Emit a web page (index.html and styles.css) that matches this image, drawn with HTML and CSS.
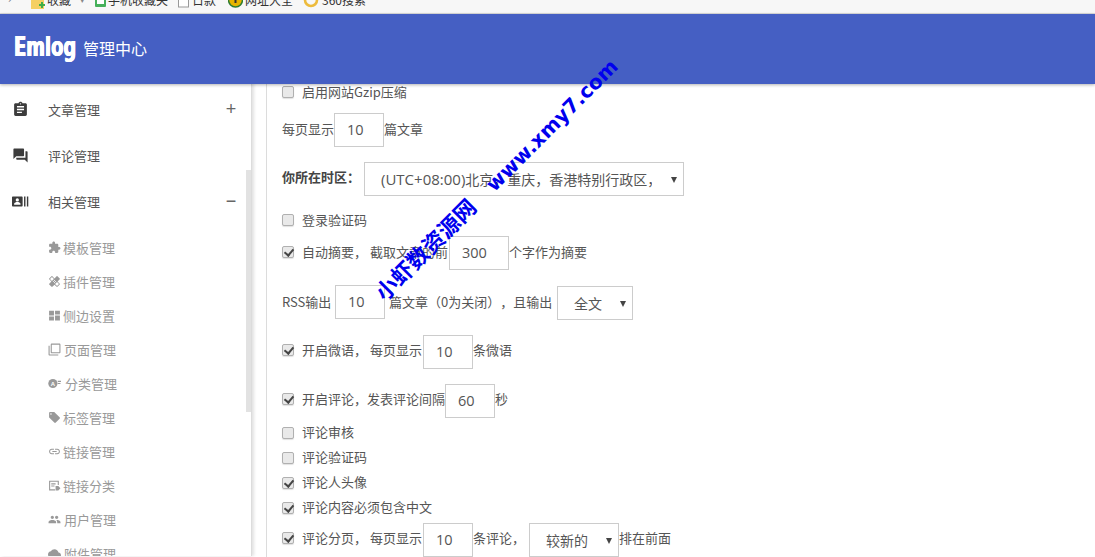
FILE: index.html
```html
<!DOCTYPE html>
<html lang="zh">
<head>
<meta charset="utf-8">
<title>Emlog 管理中心</title>
<link rel="stylesheet" href="styles.css">
</head>
<body>
<div class="bookmarks">
  <span class="chev">›</span>
  <span class="bm bm-fav"><svg width="14" height="14" viewBox="0 0 14 14"><path d="M0 0h13v9H0z" fill="#f5cf62"/><path d="M8 4h2V2h2v2h2v2h-2v2h-2V6H8z" fill="#3fae49"/></svg>收藏<span class="bm-caret">▾</span></span>
  <span class="bm bm-phone"><svg width="11" height="14" viewBox="0 0 11 14"><rect x="0" y="-2" width="11" height="9" rx="1" fill="#46b05a"/><rect x="2" y="-2" width="7" height="6" fill="#fff"/></svg>手机收藏夹</span>
  <span class="bm bm-day"><svg width="12" height="14" viewBox="0 0 12 14"><rect x=".5" y="-2" width="10" height="9" fill="#fff" stroke="#999"/></svg>日款</span>
  <span class="bm bm-web"><svg width="15" height="14" viewBox="0 0 15 14"><circle cx="7.500" cy="0" r="7" fill="#e6b400" stroke="#2e7d32" stroke-width="1.500"/><rect x="6.500" y="0" width="2" height="3" fill="#333"/></svg>网址大全</span>
  <span class="bm bm-360"><svg width="17" height="14" viewBox="0 0 17 14"><circle cx="8" cy="0" r="6" fill="none" stroke="#edbb3c" stroke-width="2.600"/></svg>360搜索</span>
</div>
<header class="topbar">
  <span class="logo"><span class="logo-text">Emlog</span></span>
  <span class="logo-sub">管理中心</span>
</header>
<div class="main">
  <nav class="sidebar">
    <ul class="menu">
      <li class="menu-item">
        <svg class="menu-icon" viewBox="0 0 24 24"><path d="M19 3h-4.200C14.400 1.800 13.300 1 12 1s-2.400.8-2.800 2H5C3.900 3 3 3.900 3 5v14c0 1.100.9 2 2 2h14c1.100 0 2-.9 2-2V5c0-1.100-.9-2-2-2zm-7 0c.6 0 1 .4 1 1s-.4 1-1 1-1-.4-1-1 .4-1 1-1zm2 14H7v-2h7v2zm3-4H7v-2h10v2zm0-4H7V7h10v2z" fill="#3c3c3c"/></svg>
        <span class="menu-label">文章管理</span><span class="toggle">+</span>
      </li>
      <li class="menu-item">
        <svg class="menu-icon" viewBox="0 0 24 24"><path d="M21 6h-2v9H6v2c0 .6.400 1 1 1h11l4 4V7c0-.6-.4-1-1-1zm-4 6V3c0-.6-.4-1-1-1H3c-.6 0-1 .4-1 1v14l4-4h10c.6 0 1-.4 1-1z" fill="#3c3c3c"/></svg>
        <span class="menu-label">评论管理</span>
      </li>
      <li class="menu-item">
        <svg class="menu-icon" viewBox="0 0 24 24"><path d="M1 5h13c.6 0 1 .4 1 1v12c0 .6-.4 1-1 1H1c-.6 0-1-.4-1-1V6c0-.6.400-1 1-1zm6.500 2.500a2.300 2.300 0 1 0 0 4.600 2.300 2.300 0 0 0 0-4.600zM3 16.500h9V15c0-1.500-3-2.300-4.500-2.300S3 13.500 3 15zM17 5h2v14h-2zM21 5h2v14h-2z" fill="#3c3c3c"/></svg>
        <span class="menu-label">相关管理</span><span class="toggle">−</span>
      </li>
    </ul>
    <ul class="submenu">
      <li class="sub-item"><svg class="sub-icon" viewBox="0 0 24 24"><path d="M20.500 11H19V7c0-1.100-.9-2-2-2h-4V3.500C13 2.120 11.880 1 10.500 1S8 2.120 8 3.500V5H4c-1.100 0-1.990.9-1.990 2v3.800H3.500c1.490 0 2.700 1.210 2.700 2.700s-1.210 2.700-2.700 2.700H2V20c0 1.100.9 2 2 2h3.800v-1.500c0-1.490 1.210-2.700 2.700-2.700 1.490 0 2.700 1.210 2.700 2.700V22H17c1.100 0 2-.9 2-2v-4h1.500c1.380 0 2.500-1.120 2.500-2.500S21.880 11 20.500 11z"/></svg><span class="gap-a">模板管理</span></li>
      <li class="sub-item"><svg class="sub-icon" viewBox="0 0 24 24"><path d="M17.730 12.020l3.980-3.980c.39-.39.39-1.020 0-1.410l-4.340-4.340c-.39-.39-1.020-.39-1.410 0l-3.980 3.980L8 2.290C7.800 2.100 7.550 2 7.290 2c-.25 0-.51.100-.7.290L2.250 6.630c-.39.390-.39 1.020 0 1.410l3.980 3.980L2.250 16c-.39.390-.39 1.020 0 1.410l4.340 4.340c.39.390 1.020.390 1.410 0l3.980-3.980 3.980 3.980c.2.200.45.290.71.290.26 0 .51-.1.710-.29l4.340-4.340c.39-.39.39-1.020 0-1.410l-3.990-3.980zM12 9c.55 0 1 .45 1 1s-.45 1-1 1-1-.45-1-1 .45-1 1-1zm-4.710 1.960L3.660 7.340l3.630-3.630 3.620 3.620-3.620 3.630zM10 13c-.55 0-1-.45-1-1s.45-1 1-1 1 .45 1 1-.45 1-1 1zm2 2c-.55 0-1-.45-1-1s.45-1 1-1 1 .45 1 1-.45 1-1 1zm2-4c.55 0 1 .45 1 1s-.45 1-1 1-1-.45-1-1 .45-1 1-1zm2.660 9.340l-3.630-3.620 3.630-3.630 3.620 3.620-3.620 3.630z"/></svg><span class="gap-a">插件管理</span></li>
      <li class="sub-item"><svg class="sub-icon" viewBox="0 0 24 24"><path d="M2 3h9v9H2zM13 3h9v7h-9zM2 14h9v7H2zM13 12h9v9h-9z"/></svg><span class="gap-a">侧边设置</span></li>
      <li class="sub-item"><svg class="sub-icon" viewBox="0 0 24 24"><path d="M3 5H1v16c0 1.100.9 2 2 2h16v-2H3V5zm18-4H7c-1.100 0-2 .9-2 2v14c0 1.100.9 2 2 2h14c1.100 0 2-.9 2-2V3c0-1.100-.9-2-2-2zm0 16H7V3h14v14z"/></svg><span class="gap-b">页面管理</span></li>
      <li class="sub-item"><svg class="sub-icon" viewBox="0 0 24 24"><circle cx="9" cy="12" r="8.500"/><path d="M18 7h6v2h-6zM18 11h5v2h-5z"/><text x="9" y="16" class="icon-a">A</text></svg><span class="gap-c">分类管理</span></li>
      <li class="sub-item"><svg class="sub-icon" viewBox="0 0 24 24"><path d="M21.410 11.580l-9-9C12.050 2.220 11.550 2 11 2H4c-1.100 0-2 .9-2 2v7c0 .55.22 1.050.59 1.420l9 9c.36.360.86.580 1.410.580.55 0 1.050-.22 1.410-.59l7-7c.37-.36.59-.86.59-1.410 0-.55-.23-1.060-.59-1.420zM5.500 7C4.670 7 4 6.330 4 5.500S4.670 4 5.500 4 7 4.670 7 5.500 6.330 7 5.500 7z"/></svg><span class="gap-a">标签管理</span></li>
      <li class="sub-item"><svg class="sub-icon" viewBox="0 0 24 24"><path d="M3.900 12c0-1.710 1.390-3.100 3.100-3.100h4V7H7c-2.760 0-5 2.240-5 5s2.240 5 5 5h4v-1.900H7c-1.710 0-3.100-1.390-3.100-3.100zM8 13h8v-2H8v2zm9-6h-4v1.900h4c1.710 0 3.100 1.390 3.100 3.100s-1.390 3.100-3.100 3.100h-4V17h4c2.760 0 5-2.240 5-5s-2.240-5-5-5z"/></svg><span class="gap-a">链接管理</span></li>
      <li class="sub-item"><svg class="sub-icon" viewBox="0 0 24 24"><path d="M2 3h18v8h-2V5H4v14h9v2H2zM6 8h8v2H6zM6 12h6v2H6zM14 13h5l4 4-4 4h-5z"/></svg><span class="gap-a">链接分类</span></li>
      <li class="sub-item"><svg class="sub-icon" viewBox="0 0 24 24"><path d="M16 11c1.660 0 2.990-1.340 2.990-3S17.660 5 16 5c-1.660 0-3 1.340-3 3s1.340 3 3 3zm-8 0c1.660 0 2.990-1.340 2.990-3S9.660 5 8 5C6.340 5 5 6.340 5 8s1.340 3 3 3zm0 2c-2.330 0-7 1.170-7 3.500V19h14v-2.500c0-2.330-4.670-3.500-7-3.500zm8 0c-.29 0-.62.02-.97.05 1.160.84 1.970 1.970 1.970 3.450V19h6v-2.500c0-2.330-4.670-3.500-7-3.500z"/></svg><span class="gap-b">用户管理</span></li>
      <li class="sub-item"><svg class="sub-icon" viewBox="0 0 24 24"><path d="M19.350 10.040C18.670 6.590 15.640 4 12 4 9.110 4 6.600 5.640 5.350 8.040 2.340 8.360 0 10.910 0 14c0 3.310 2.690 6 6 6h13c2.760 0 5-2.240 5-5 0-2.640-2.050-4.780-4.650-4.960z"/></svg><span class="gap-b">附件管理</span></li>
    </ul>
    <div class="scrollbar"></div>
  </nav>
  <div class="content">
    <form class="settings">
      <label class="row row-gzip"><input type="checkbox" class="cb">启用网站Gzip压缩</label>
      <div class="row row-pagesize">每页显示<input class="num" value="10">篇文章</div>
      <div class="row row-tz"><b class="tz-label">你所在时区：</b>
        <span class="sel sel-tz"><span class="sel-text"><span class="sel-latin">(UTC+08:00)</span>北京，重庆，香港特别行政区，</span><i class="caret"></i></span>
      </div>
      <label class="row row-login"><input type="checkbox" class="cb">登录验证码</label>
      <div class="row row-excerpt"><input type="checkbox" class="cb" checked>自动摘要，&nbsp;截取文章的前<input class="num num-wide num-nudge" value="300">个字作为摘要</div>
      <div class="row row-rss"><span class="rss-a">RSS输出</span><input class="num" value="10"><span class="rss-b">篇文章（0为关闭），且输出</span>
        <span class="sel sel-rss"><span class="sel-text">全文</span><i class="caret"></i></span>
      </div>
      <div class="row row-twitter"><input type="checkbox" class="cb" checked>开启微语，&nbsp;每页显示<input class="num num-nudge" value="10">条微语</div>
      <div class="row row-comment"><input type="checkbox" class="cb" checked>开启评论，发表评论间隔<input class="num" value="60">秒</div>
      <div class="checks">
        <label class="row row-check"><input type="checkbox" class="cb">评论审核</label>
        <label class="row row-check"><input type="checkbox" class="cb">评论验证码</label>
        <label class="row row-check"><input type="checkbox" class="cb" checked>评论人头像</label>
        <label class="row row-check"><input type="checkbox" class="cb" checked>评论内容必须包含中文</label>
      </div>
      <div class="row row-paging"><input type="checkbox" class="cb" checked>评论分页，&nbsp;每页显示<input class="num num-nudge" value="10"><span class="page-b">条评论，</span>
        <span class="sel sel-order"><span class="sel-text">较新的</span><i class="caret"></i></span>排在前面</div>
    </form>
  </div>
</div>
<div class="watermark">小虾数资源网&nbsp;&nbsp;&nbsp;<span class="wm-url">www.xmy7.com</span></div>
</body>
</html>
```
FILE: styles.css
```css
* { box-sizing: border-box; }
html, body { margin: 0; padding: 0; height: 100%; }
body {
  width: 1095px; height: 557px; overflow: hidden; background: #fff; position: relative;
  font-family: "Noto Sans CJK SC", "Liberation Sans", sans-serif; font-size: 13px; color: #555;
  text-spacing-trim: space-all; font-feature-settings: "chws" 0;
}
ul { list-style: none; margin: 0; padding: 0; }

.bookmarks {
  height: 14px; background: #f7f7f7; border-bottom: 1px solid #dcdcdc; overflow: hidden;
  display: flex; align-items: flex-start; font-size: 12px; line-height: 12px; color: #333; padding-left: 8px;
}
.bookmarks .bm { display: flex; align-items: flex-start; gap: 2px; margin-top: -6px; flex: none; }
.bookmarks svg { margin-top: 6px; flex: none; }
.chev { width: 23px; margin-top: -8px; color: #777; flex: none; }
.bm-caret { margin-left: 7px; font-size: 9px; color: #888; }
.bm-fav { width: 64px; }
.bm-phone { width: 83px; }
.bm-day { width: 50px; }
.bm-web { width: 75px; }

.topbar {
  height: 70px; background: #455fc3; color: #fff; display: flex; align-items: center; padding-left: 14px;
  box-shadow: 0 1px 3px rgba(0,0,0,.3); position: relative; z-index: 2;
}
.logo { width: 69px; flex: none; display: block; height: 32px; margin-top: -4px; }
.logo-text {
  display: block; width: 90px; transform: scaleX(.69); transform-origin: left center;
  font-family: "DejaVu Sans", sans-serif; font-weight: 700; font-size: 26px; line-height: 32px;
  text-shadow: .6px 0 0 #fff, -.6px 0 0 #fff;
}
.logo-sub { font-size: 16px; line-height: 20px; margin-top: -2px; }

.main { display: flex; height: 473px; overflow: hidden; }
.sidebar { width: 252px; flex: none; border-right: 1px solid #dcdcdc; box-shadow: 2px 0 3px rgba(0,0,0,.12); position: relative; padding-top: 3px; height: 473px; overflow: hidden; margin-top: -1px; }
.menu-item { height: 46px; display: flex; align-items: center; padding-left: 12px; color: #555; }
.menu-icon { width: 17px; height: 17px; flex: none; margin-right: 19px; }
.menu-label { width: 177px; }
.toggle { font-size: 18px; font-weight: 300; color: #666; line-height: 20px; width: 12px; text-align: center; font-family: "Liberation Sans", sans-serif; }
.submenu { padding: 6px 0 0 48px; }
.sub-item { height: 34px; display: flex; align-items: center; color: #999; }
.sub-icon { width: 13px; height: 13px; fill: #999; flex: none; }
.icon-a { font-size: 11px; fill: #fff; text-anchor: middle; font-family: "Liberation Sans", sans-serif; font-weight: 700; }
.gap-a { margin-left: 2px; }
.gap-b { margin-left: 3px; }
.gap-c { margin-left: 4px; }
.scrollbar { position: absolute; right: 0; top: 87px; width: 5px; height: 242px; background: #e2e2e2; }

.content { flex: 1; margin-left: 14px; border-left: 1px solid #dcdcdc; padding-left: 15px; height: 473px; overflow: hidden; }
.row { display: flex; align-items: center; white-space: nowrap; color: #555; }
.cb {
  appearance: none; width: 12px; height: 12px; margin: 2px 8px 0 0; flex: none; position: relative;
  border: 1px solid #b0b0b0; border-radius: 2px; background: #e9e9e9; box-shadow: 0 1px 1px rgba(0,0,0,.12);
}
.cb:checked::after {
  content: ""; position: absolute; left: 3px; top: 0; width: 4px; height: 7px;
  border: solid #444; border-width: 0 2px 2px 0; transform: rotate(40deg);
}
.num, .sel {
  height: 34px; border: 1px solid #ccc; background: #fff; color: #555; font-family: "Open Sans", "Noto Sans CJK SC", sans-serif;
  font-size: 14.5px; flex: none; align-self: flex-start; margin-top: var(--lift);
}
.num { width: 50px; padding: 0 12px 1px; outline: none; }
.num-wide { width: 60px; }
.num-nudge { margin-left: 1px; }
.sel { display: flex; align-items: center; position: relative; padding-left: 16px; font-size: 14px; }
.sel-text { overflow: hidden; display: block; }
.sel-latin { font-size: 15px; }
.caret { position: absolute; right: 6px; top: 14px; width: 0; height: 0; border-left: 3px solid transparent; border-right: 3px solid transparent; border-top: 6px solid #444; }

.row-gzip { height: 18px; margin-top: -2px; }
.row-pagesize { height: 38px; margin-top: 9px; --lift: 4px; }
.row-tz { height: 40px; margin-top: 9px; --lift: 6px; }
.tz-label { width: 82px; color: #444; }
.sel-tz { width: 320px; }
.sel-tz .sel-text { width: 271px; height: 20px; line-height: 20px; white-space: nowrap; }
.row-login { margin-top: 14px; height: 18px; }
.row-excerpt { height: 38px; margin-top: 4px; --lift: 4px; }
.row-rss { height: 36px; margin-top: 13px; --lift: 2px; }
.rss-a { width: 53px; }
.rss-b { margin-left: 4px; width: 168px; }
.sel-rss { width: 76px; margin-top: 3px; }
.row-twitter { height: 40px; margin-top: 10px; --lift: 6px; }
.row-comment { height: 40px; margin-top: 9px; --lift: 6px; }
.checks { margin-top: 1px; }
.row-check { height: 25px; }
.row-paging { height: 40px; margin-top: -2px; --lift: 6px; }
.page-b { width: 56px; }
.sel-order { width: 90px; }

.watermark {
  position: absolute; left: 327px; top: 167px; width: 340px; display: flex; justify-content: center; align-items: baseline; transform: rotate(-45deg); z-index: 5;
  color: #0000ee; font-family: "DejaVu Sans", "Noto Sans CJK SC", sans-serif; font-size: 22px; font-weight: 700; line-height: 26px; white-space: pre;
}
.wm-url { font-size: 20px; }
```
